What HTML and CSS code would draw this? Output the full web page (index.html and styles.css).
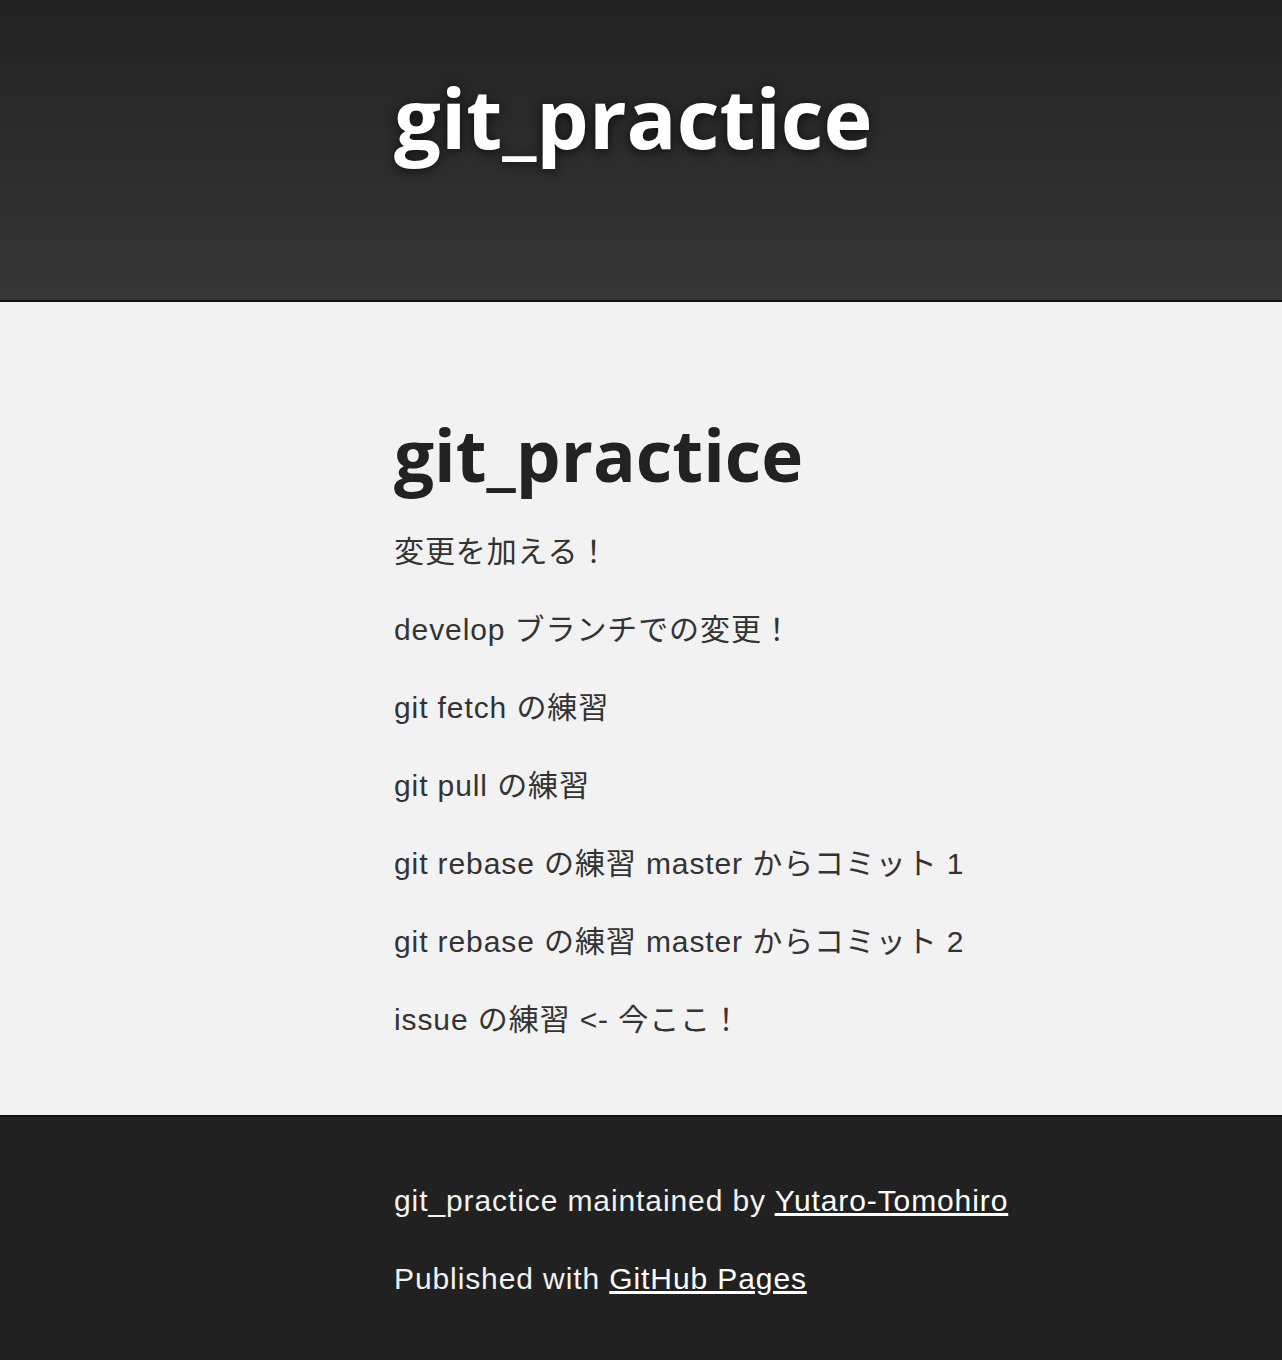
FILE: index.html
```html
<!DOCTYPE html>
<html lang="ja">
<head>
<meta charset="utf-8">
<title>git_practice</title>
<link rel="stylesheet" href="styles.css">
</head>
<body>
<header class="site-header">
  <div class="wrap">
    <h1 class="site-title">git_practice</h1>
  </div>
</header>
<main class="site-main">
  <div class="wrap">
    <h1 class="page-title">git_practice</h1>
    <p>変更を加える！</p>
    <p>develop ブランチでの変更！</p>
    <p>git fetch の練習</p>
    <p>git pull の練習</p>
    <p>git rebase の練習 master からコミット 1</p>
    <p>git rebase の練習 master からコミット 2</p>
    <p>issue の練習 &lt;- 今ここ！</p>
  </div>
</main>
<footer class="site-footer">
  <div class="wrap">
    <p>git_practice maintained by <a href="#">Yutaro-Tomohiro</a></p>
    <p>Published with <a href="#">GitHub Pages</a></p>
  </div>
</footer>
</body>
</html>
```

FILE: styles.css
```css
html, body {
  margin: 0;
  padding: 0;
}
body {
  font-family: "Liberation Sans", Arial, "Noto Sans CJK JP", sans-serif;
  font-size: 30px;
  line-height: 48px;
  letter-spacing: 0.9px;
  color: #333;
  background: #f2f2f2;
}
.wrap {
  padding-left: 394px;
  padding-right: 40px;
}
.site-header {
  height: 302px;
  box-sizing: border-box;
  padding-top: 67px;
  background: linear-gradient(to bottom, #222 0%, #363636 100%);
  border-bottom: 2px solid #111;
}
.site-title {
  margin: 0;
  font-family: "Open Sans", "Noto Sans", sans-serif;
  font-weight: 700;
  font-size: 83px;
  line-height: 100px;
  letter-spacing: 0;
  color: #fff;
  text-shadow: 0 2px 12px rgba(0, 0, 0, 0.7);
}
.site-main {
  padding-top: 111px;
  padding-bottom: 71px;
}
.page-title {
  margin: 0 0 31px;
  font-family: "Open Sans", "Noto Sans", sans-serif;
  font-weight: 700;
  font-size: 71px;
  line-height: 84px;
  letter-spacing: 0;
  color: #222;
}
.site-main p,
.site-footer p {
  margin: 0 0 30px;
}
.site-main p:last-child,
.site-footer p:last-child {
  margin-bottom: 0;
}
.site-footer {
  background: #212121;
  border-top: 2px solid #111;
  padding-top: 60px;
  padding-bottom: 60px;
  color: #f2f2f2;
}
.site-footer a {
  color: #fff;
  text-decoration: underline;
}
```
